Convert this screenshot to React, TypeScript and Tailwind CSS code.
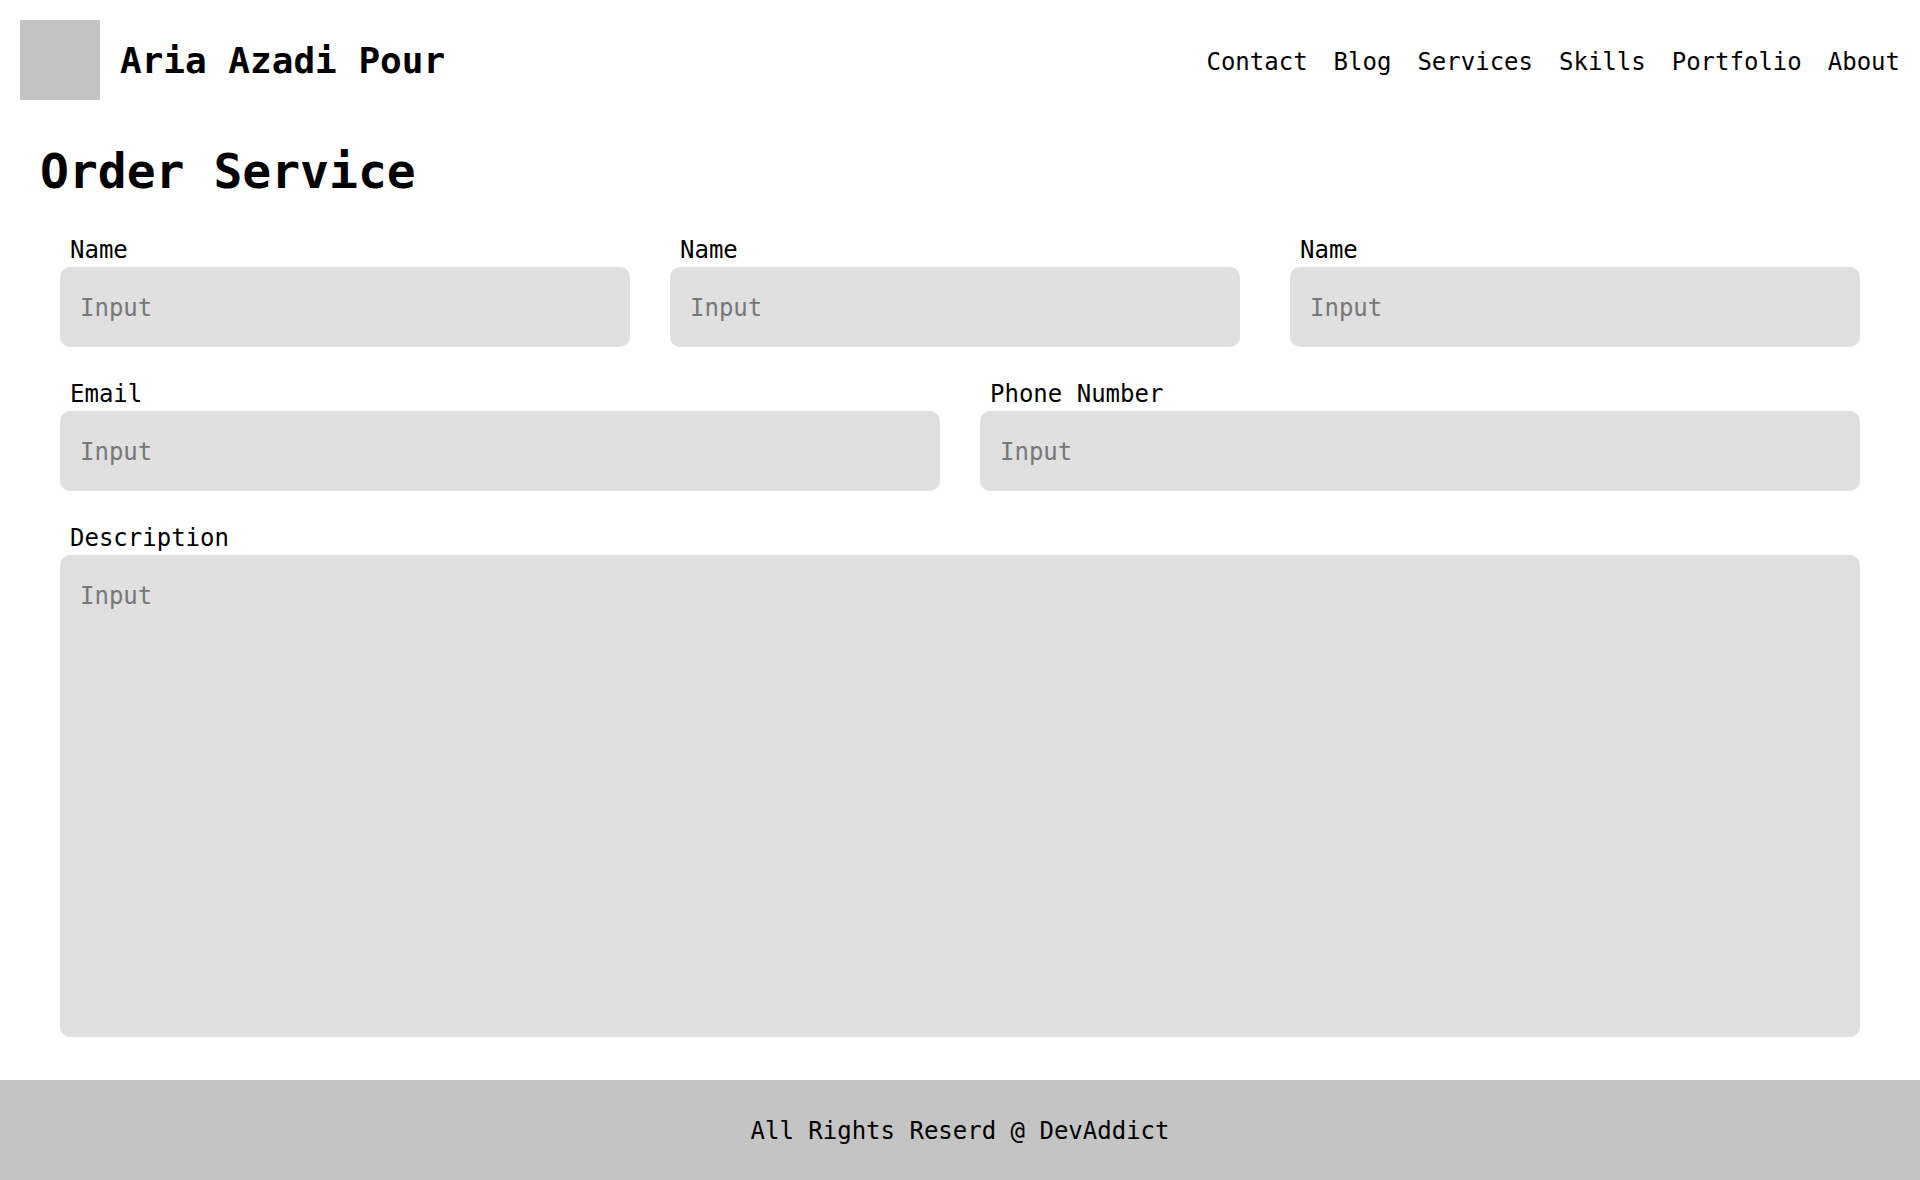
import React from 'react';

const navLinks = ['Contact', 'Blog', 'Services', 'Skills', 'Portfolio', 'About'];

type FieldProps = {
  label: string;
  className?: string;
};

const Field: React.FC<FieldProps> = ({ label, className }) => (
  <div className={`flex flex-col ${className ?? ''}`}>
    <label className="block pl-[10px] text-2xl leading-[30px] mb-[2px]">{label}</label>
    <input
      type="text"
      placeholder="Input"
      className="h-20 w-full rounded-[10px] bg-[#e0e0e0] px-5 pt-[2px] text-2xl outline-none placeholder:text-[#777777]"
    />
  </div>
);

const App: React.FC = () => {
  return (
    <div className="min-h-screen flex flex-col bg-white text-black font-['DejaVu_Sans_Mono','Liberation_Mono',monospace]">
      {/* Header */}
      <header className="flex items-center justify-between p-5">
        <div className="flex items-center gap-5">
          <div className="w-20 h-20 bg-[#c4c4c4]" />
          <h1 className="text-4xl font-bold pt-[2px]">Aria Azadi Pour</h1>
        </div>
        <nav className="flex items-center gap-[26px] pt-[3px] text-2xl">
          {navLinks.map(link => (
            <a key={link} href="#" className="leading-[30px]">
              {link}
            </a>
          ))}
        </nav>
      </header>

      {/* Order form */}
      <main className="flex-1 px-10 pt-[27px] pb-[43px]">
        <h2 className="text-5xl leading-none font-bold">Order Service</h2>

        <form className="mt-10 pl-5 pr-5 flex flex-col gap-[32px]">
          <div className="flex">
            <Field label="Name" className="w-[570px]" />
            <Field label="Name" className="w-[570px] ml-10" />
            <Field label="Name" className="w-[570px] ml-[50px]" />
          </div>

          <div className="flex gap-10">
            <Field label="Email" className="flex-1" />
            <Field label="Phone Number" className="flex-1" />
          </div>

          <div className="flex flex-col">
            <label className="block pl-[10px] text-2xl leading-[30px] mb-[2px]">Description</label>
            <textarea
              placeholder="Input"
              className="h-[482px] w-full resize-none rounded-[10px] bg-[#e0e0e0] px-5 pt-[23px] text-2xl leading-9 outline-none placeholder:text-[#777777]"
            />
          </div>
        </form>
      </main>

      {/* Footer */}
      <footer className="h-[100px] flex items-center justify-center bg-[#c4c4c4] pt-[2px] text-2xl">
        All Rights Reserd @ DevAddict
      </footer>
    </div>
  );
};

export default App;
